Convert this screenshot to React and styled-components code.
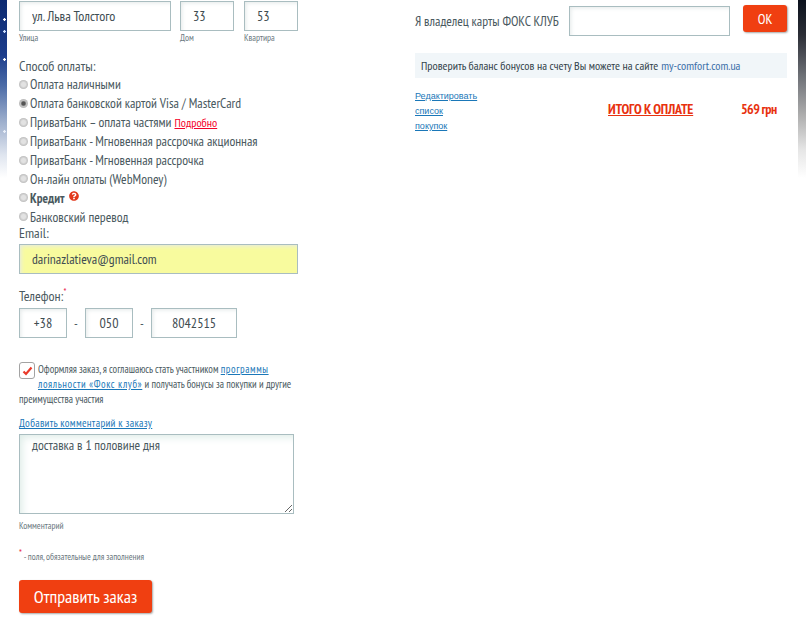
import React from "react";
import styled, { createGlobalStyle } from "styled-components";
import { FaQuestionCircle } from "react-icons/fa";

const Global = createGlobalStyle`
  html, body {
    margin: 0;
    padding: 0;
    background: #fff;
  }
  body {
    font-family: "PT Sans Narrow", "Liberation Sans", sans-serif;
    font-size: 13px;
    color: #4a5960;
  }
  input, textarea, button {
    font-family: inherit;
  }
`;

const Page = styled.div`
  width: 806px;
  height: 628px;
  overflow: hidden;
  display: flex;
  background:
    radial-gradient(circle, #fff 0 1px, transparent 1.5px) 3px 18px / 3px 3px no-repeat,
    radial-gradient(circle, #cfe0ff 0 1px, transparent 1.5px) 3px 30px / 3px 3px no-repeat,
    radial-gradient(circle, #fff 0 1px, transparent 1.5px) 3px 58px / 3px 3px no-repeat,
    radial-gradient(circle, #e8eef8 0 1px, transparent 1.5px) 3px 130px / 3px 3px no-repeat,
    linear-gradient(#0c2a70 0, #1c3d8c 55px, #4a6aa6 85px, #9aaccb 120px, #dfe5ef 155px, #fff 178px) left top / 7px 100% no-repeat,
    linear-gradient(#0b111d 0, #2b2e36 35px, #6c6f75 75px, #adadad 115px, #e6e6e6 150px, #fff 178px) right top / 8px 100% no-repeat,
    #fff;
`;

const Content = styled.div`
  flex: 1;
  margin: 0 8px 0 7px;
  background: #fff;
  padding: 1px 11px 0 12px;
  display: grid;
  grid-template-columns: 279px 372px;
  column-gap: 117px;
  align-items: start;
`;

const Column = styled.div`
  display: flex;
  flex-direction: column;
`;

const Row = styled.div`
  display: flex;
  align-items: ${(p) => p.$align || "flex-start"};
  gap: ${(p) => p.$gap || 0}px;
  margin-top: ${(p) => p.$top || 0}px;
`;

const Field = styled.div`
  display: flex;
  flex-direction: column;
  margin-left: ${(p) => p.$left || 0}px;
`;

const Input = styled.input`
  box-sizing: border-box;
  display: block;
  width: ${(p) => p.$w}px;
  height: 30px;
  margin-top: ${(p) => p.$top || 0}px;
  padding: 0 0 0 ${(p) => p.$pad ?? 12}px;
  border: 1px solid #a9bdc0;
  border-radius: 0;
  outline: none;
  background: ${(p) => p.$bg || "#fff"};
  box-shadow: inset 3px 3px 4px -2px #e4e9e9;
  font-size: ${(p) => p.$size || 14}px;
  color: #3f4d52;
  text-align: ${(p) => (p.$center ? "center" : "left")};
`;

const Hint = styled.div`
  font-size: 9.3px;
  line-height: 12px;
  margin-top: ${(p) => p.$top ?? 1}px;
  color: #6b7880;
`;

const Title = styled.div`
  font-size: 14px;
  line-height: 16px;
  margin-top: ${(p) => p.$top || 0}px;
`;

const PayList = styled.div`
  margin-top: 1px;
  display: flex;
  flex-direction: column;
`;

const PayRow = styled.label`
  display: flex;
  align-items: center;
  gap: 2px;
  height: 18.9px;
  font-size: 13.5px;
  white-space: nowrap;
`;

const Radio = styled.span`
  box-sizing: border-box;
  width: 9px;
  height: 9px;
  border-radius: 50%;
  background: ${(p) =>
    p.$on
      ? "radial-gradient(circle, #555 0 1.6px, #c2c2c2 3px, #bbb 4.5px)"
      : "radial-gradient(circle, #e2e2e2 0 2px, #bcbcbc 4.5px)"};
  flex: none;
`;

const Bold = styled.b`
  font-weight: 700;
  font-size: 13px;
`;

const RedLink = styled.a`
  color: #f4002a;
  font-size: 12px;
  text-decoration: underline;
  margin-left: 1px;
`;

const HelpIcon = styled(FaQuestionCircle)`
  color: #e2391c;
  width: 10px;
  height: 10px;
  margin-left: 2px;
  margin-bottom: 3px;
`;

const Dash = styled.span`
  width: 18px;
  text-align: center;
`;

const Star = styled.sup`
  color: #e8103a;
  font-size: 10px;
  line-height: 0;
`;

const Agree = styled.div`
  margin-top: 24px;
  font-size: 10.6px;
  line-height: 15px;
  width: 279px;
`;

const CheckBox = styled.span`
  box-sizing: border-box;
  float: left;
  width: 16px;
  height: 17px;
  margin: 0 3px 0 0;
  border: 1px solid #a3a3a3;
  border-radius: 3px;
  display: flex;
  align-items: center;
  justify-content: center;
  background: #fff;
`;

const Link = styled.a`
  color: #1a77b8;
  text-decoration: underline;
  letter-spacing: ${(p) => p.$spacing || 0}px;
`;

const AddComment = styled(Link)`
  margin-top: 9px;
  font-size: 11px;
  line-height: 14px;
`;

const SiteLink = styled.a`
  color: #3a6ea8;
  margin-left: 3px;
`;

const Comment = styled.textarea`
  box-sizing: border-box;
  display: block;
  width: 275px;
  height: 80px;
  margin-top: 4px;
  padding: 1px 12px;
  border: 1px solid #a9bdc0;
  outline: none;
  box-shadow: inset 5px 5px 8px -3px #dcebe6;
  font-size: 13.5px;
  color: #4a5960;
`;

const Required = styled.div`
  margin-top: 19px;
  font-size: 9.2px;
  color: #6b7880;
  line-height: 12px;
`;

const Button = styled.button`
  box-sizing: border-box;
  width: ${(p) => p.$w}px;
  height: ${(p) => p.$h}px;
  margin-top: ${(p) => p.$top || 0}px;
  margin-left: ${(p) => p.$left || 0}px;
  margin-bottom: ${(p) => p.$bottom || 0}px;
  border: none;
  border-radius: 3px;
  background: #f03f11;
  box-shadow: 1px 1px 2px rgba(0, 0, 0, 0.35);
  color: #fff;
  font-size: ${(p) => p.$size}px;
  padding: 0;
`;

const OwnerRow = styled.div`
  display: flex;
  align-items: center;
  height: 34px;
  margin-top: 3px;
`;

const Owner = styled.span`
  font-size: 13.5px;
  width: 154px;
`;

const Notice = styled.div`
  margin-top: 15px;
  height: 25px;
  padding-left: 6px;
  background: #f1f6f9;
  display: flex;
  align-items: center;
  font-size: 12px;
  color: #33434b;
`;

const Summary = styled.div`
  margin-top: 11px;
  display: grid;
  grid-template-columns: 193px 133px auto;
  align-items: start;
`;

const EditLink = styled.a`
  font-family: "Liberation Sans", sans-serif;
  font-size: 9px;
  line-height: 15px;
  color: #1a77b8;
  text-decoration: underline;
  display: block;
`;

const Total = styled.a`
  color: #e8320f;
  font-size: 14px;
  font-weight: 700;
  letter-spacing: -0.2px;
  text-decoration: underline;
  margin-top: 11px;
`;

const Price = styled.span`
  color: #e8320f;
  font-size: 14px;
  font-weight: 700;
  letter-spacing: -0.6px;
  margin-top: 11px;
`;

const methods = [
  "Оплата наличными",
  "Оплата банковской картой Visa / MasterCard",
  "ПриватБанк – оплата частями",
  "ПриватБанк - Мгновенная рассрочка акционная",
  "ПриватБанк - Мгновенная рассрочка",
  "Он-лайн оплаты (WebMoney)",
  "Кредит",
  "Банковский перевод",
];

export default function App() {
  return (
    <Page>
      <Global />
      <Content>
        <Column>
          <Row>
            <Field>
              <Input $w={152} defaultValue="ул. Льва Толстого" />
              <Hint>Улица</Hint>
            </Field>
            <Field $left={9}>
              <Input $w={54} defaultValue="33" />
              <Hint>Дом</Hint>
            </Field>
            <Field $left={10}>
              <Input $w={54} defaultValue="53" />
              <Hint>Квартира</Hint>
            </Field>
          </Row>

          <Title $top={14}>Способ оплаты:</Title>
          <PayList>
            {methods.map((m, i) => (
              <PayRow key={m}>
                <Radio $on={i === 1} />
                <span>{m === "Кредит" ? <Bold>{m}</Bold> : m}</span>
                {i === 2 && <RedLink>Подробно</RedLink>}
                {i === 6 && <HelpIcon />}
              </PayRow>
            ))}
          </PayList>

          <Title $top={-1}>Email:</Title>
          <Input $w={279} $top={3} $size={13.5} $bg="#f8fb9e" defaultValue="darinazlatieva@gmail.com" />

          <Title $top={14}>
            Телефон:<Star>*</Star>
          </Title>
          <Row $align="center" $top={4}>
            <Input $w={48} $pad={0} $center defaultValue="+38" />
            <Dash>-</Dash>
            <Input $w={48} $pad={0} $center defaultValue="050" />
            <Dash>-</Dash>
            <Input $w={86} $pad={0} $center defaultValue="8042515" />
          </Row>

          <Agree>
            <CheckBox>
              <svg width="11" height="10" viewBox="0 0 11 10">
                <path d="M1.5 5.5 L4 8 L9.5 1.5" fill="none" stroke="#ea3a2a" strokeWidth="2.2" />
              </svg>
            </CheckBox>
            Оформляя заказ, я соглашаюсь стать участником <Link $spacing={0.6}>программы</Link>{" "}
            <Link $spacing={0.6}>лояльности «Фокс клуб»</Link> и получать бонусы за покупки и другие преимущества участия
          </Agree>

          <AddComment $spacing={0.3}>Добавить комментарий к заказу</AddComment>
          <Comment defaultValue="доставка в 1 половине дня" />
          <Hint $top={6}>Комментарий</Hint>
          <Required>
            <Star>*</Star> - поля, обязательные для заполнения
          </Required>
          <Button $w={133} $h={33} $size={18} $top={17}>Отправить заказ</Button>
        </Column>

        <Column>
          <OwnerRow>
            <Owner>Я владелец карты ФОКС КЛУБ</Owner>
            <Input $w={161} />
            <Button $w={44} $h={27} $size={14} $left={13} $bottom={5}>OK</Button>
          </OwnerRow>
          <Notice>
            Проверить баланс бонусов на счету Вы можете на сайте
            <SiteLink>my-comfort.com.ua</SiteLink>
          </Notice>
          <Summary>
            <div>
              <EditLink>Редактировать</EditLink>
              <EditLink>список</EditLink>
              <EditLink>покупок</EditLink>
            </div>
            <Total>ИТОГО К ОПЛАТЕ</Total>
            <Price>569 грн</Price>
          </Summary>
        </Column>
      </Content>
    </Page>
  );
}
